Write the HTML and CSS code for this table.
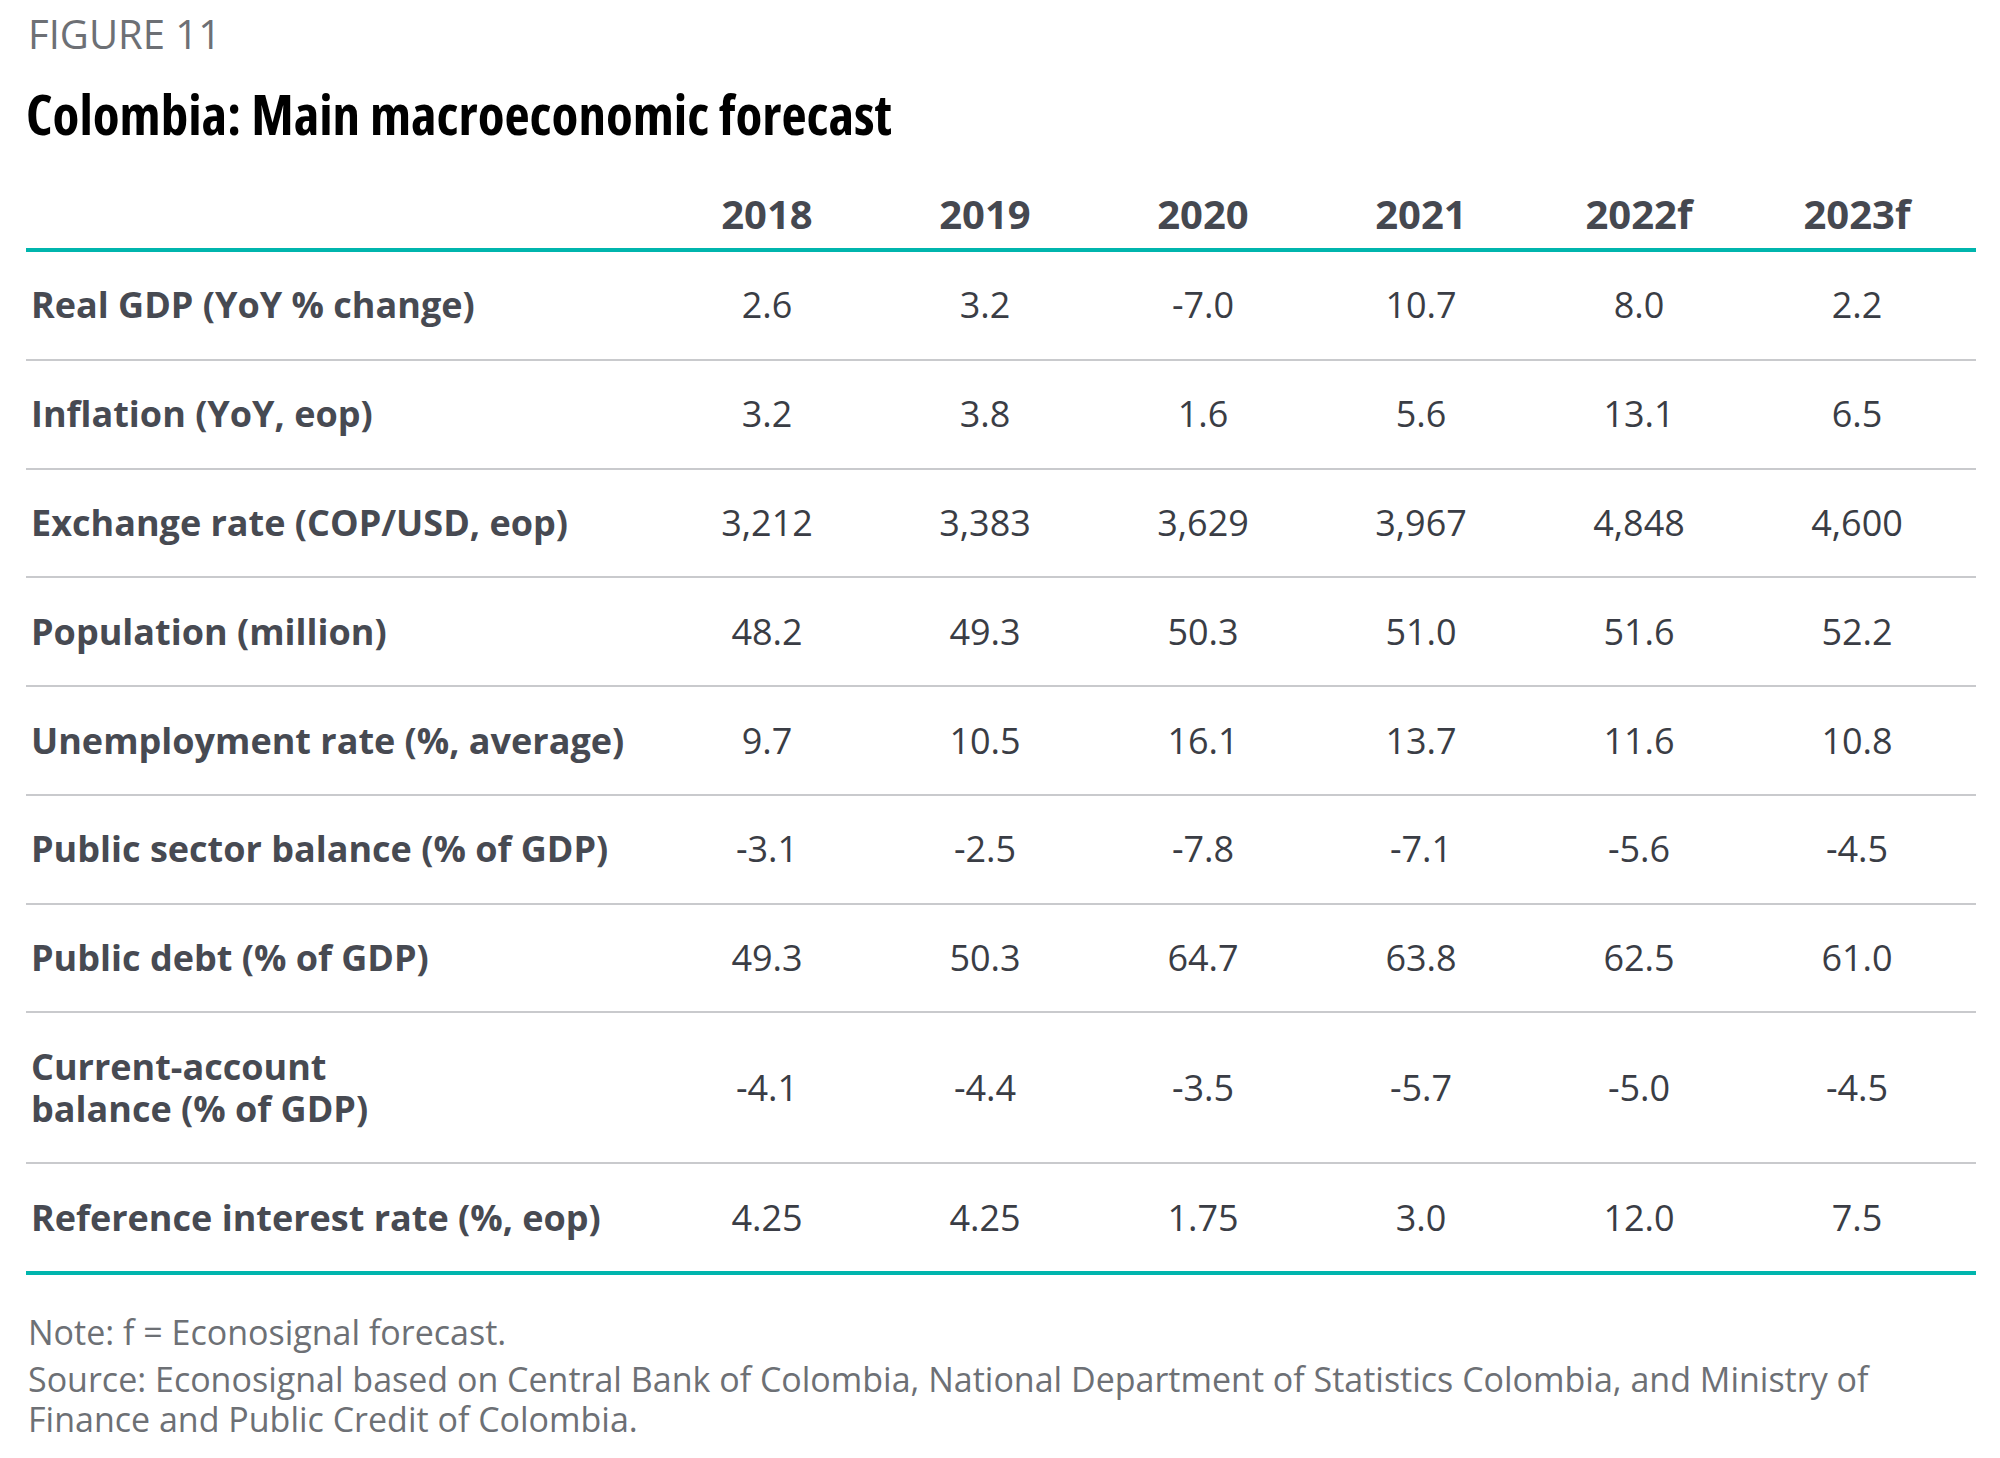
FILE: index.html
```html
<!DOCTYPE html>
<html lang="en">
<head>
<meta charset="utf-8">
<title>Colombia: Main macroeconomic forecast</title>
<link rel="stylesheet" href="styles.css">
</head>
<body>
<div class="page">
  <div class="fig-label">FIGURE 11</div>
  <h1 class="fig-title">Colombia: Main macroeconomic forecast</h1>

  <div class="table">
    <div class="row head">
      <div class="label"></div>
      <div class="year">2018</div>
      <div class="year">2019</div>
      <div class="year">2020</div>
      <div class="year">2021</div>
      <div class="year">2022f</div>
      <div class="year">2023f</div>
    </div>
    <div class="row">
      <div class="label">Real GDP (YoY % change)</div>
      <div class="val">2.6</div><div class="val">3.2</div><div class="val">-7.0</div><div class="val">10.7</div><div class="val">8.0</div><div class="val">2.2</div>
    </div>
    <div class="row">
      <div class="label">Inflation (YoY, eop)</div>
      <div class="val">3.2</div><div class="val">3.8</div><div class="val">1.6</div><div class="val">5.6</div><div class="val">13.1</div><div class="val">6.5</div>
    </div>
    <div class="row">
      <div class="label">Exchange rate (COP/USD, eop)</div>
      <div class="val">3,212</div><div class="val">3,383</div><div class="val">3,629</div><div class="val">3,967</div><div class="val">4,848</div><div class="val">4,600</div>
    </div>
    <div class="row">
      <div class="label">Population (million)</div>
      <div class="val">48.2</div><div class="val">49.3</div><div class="val">50.3</div><div class="val">51.0</div><div class="val">51.6</div><div class="val">52.2</div>
    </div>
    <div class="row">
      <div class="label">Unemployment rate (%, average)</div>
      <div class="val">9.7</div><div class="val">10.5</div><div class="val">16.1</div><div class="val">13.7</div><div class="val">11.6</div><div class="val">10.8</div>
    </div>
    <div class="row">
      <div class="label">Public sector balance (% of GDP)</div>
      <div class="val">-3.1</div><div class="val">-2.5</div><div class="val">-7.8</div><div class="val">-7.1</div><div class="val">-5.6</div><div class="val">-4.5</div>
    </div>
    <div class="row">
      <div class="label">Public debt (% of GDP)</div>
      <div class="val">49.3</div><div class="val">50.3</div><div class="val">64.7</div><div class="val">63.8</div><div class="val">62.5</div><div class="val">61.0</div>
    </div>
    <div class="row">
      <div class="label">Current-account<br>balance (% of GDP)</div>
      <div class="val">-4.1</div><div class="val">-4.4</div><div class="val">-3.5</div><div class="val">-5.7</div><div class="val">-5.0</div><div class="val">-4.5</div>
    </div>
    <div class="row last">
      <div class="label">Reference interest rate (%, eop)</div>
      <div class="val">4.25</div><div class="val">4.25</div><div class="val">1.75</div><div class="val">3.0</div><div class="val">12.0</div><div class="val">7.5</div>
    </div>
  </div>

  <div class="notes">
    <p class="note">Note: f = Econosignal forecast.</p>
    <p class="source">Source: Econosignal based on Central Bank of Colombia, National Department of Statistics Colombia, and Ministry of<br>Finance and Public Credit of Colombia.</p>
  </div>
</div>
</body>
</html>
```

FILE: styles.css
```css
html, body {
  margin: 0;
  padding: 0;
  background: #ffffff;
}

.page {
  width: 1950px;
  padding: 10px 0 0 26px;
  font-family: "Open Sans", "Liberation Sans", sans-serif;
}

.fig-label {
  font-size: 40px;
  line-height: 48px;
  font-weight: 400;
  color: #6d7075;
  padding-left: 2px;
}

.fig-title {
  margin: 24px 0 0 0;
  font-size: 55px;
  line-height: 64px;
  font-weight: 700;
  font-stretch: 75%;
  color: #000000;
}

.table {
  margin-top: 44px;
  width: 1950px;
}

.row {
  display: grid;
  grid-template-columns: 1fr repeat(6, 218px);
  align-items: center;
  padding-right: 10px;
  border-bottom: 2px solid #c9cacd;
}

.row.head {
  border-bottom: 4px solid #00b5ad;
  padding-bottom: 10px;
}

.row.last {
  border-bottom: 4px solid #00b5ad;
}

.year {
  text-align: center;
  font-size: 40px;
  line-height: 48px;
  font-weight: 700;
  color: #454850;
}

.label {
  padding: 32.4px 0 32.4px 5px;
  font-size: 36px;
  line-height: 42px;
  font-weight: 700;
  color: #474a52;
}

.head .label {
  padding: 0;
}

.val {
  text-align: center;
  font-size: 36px;
  line-height: 42px;
  font-weight: 400;
  color: #3a3d45;
}

.notes {
  margin-top: 37px;
  padding-left: 2px;
  color: #6d7075;
  font-size: 34px;
  line-height: 40px;
}

.notes p {
  margin: 0;
}

.note {
  margin-bottom: 7px !important;
}
```
